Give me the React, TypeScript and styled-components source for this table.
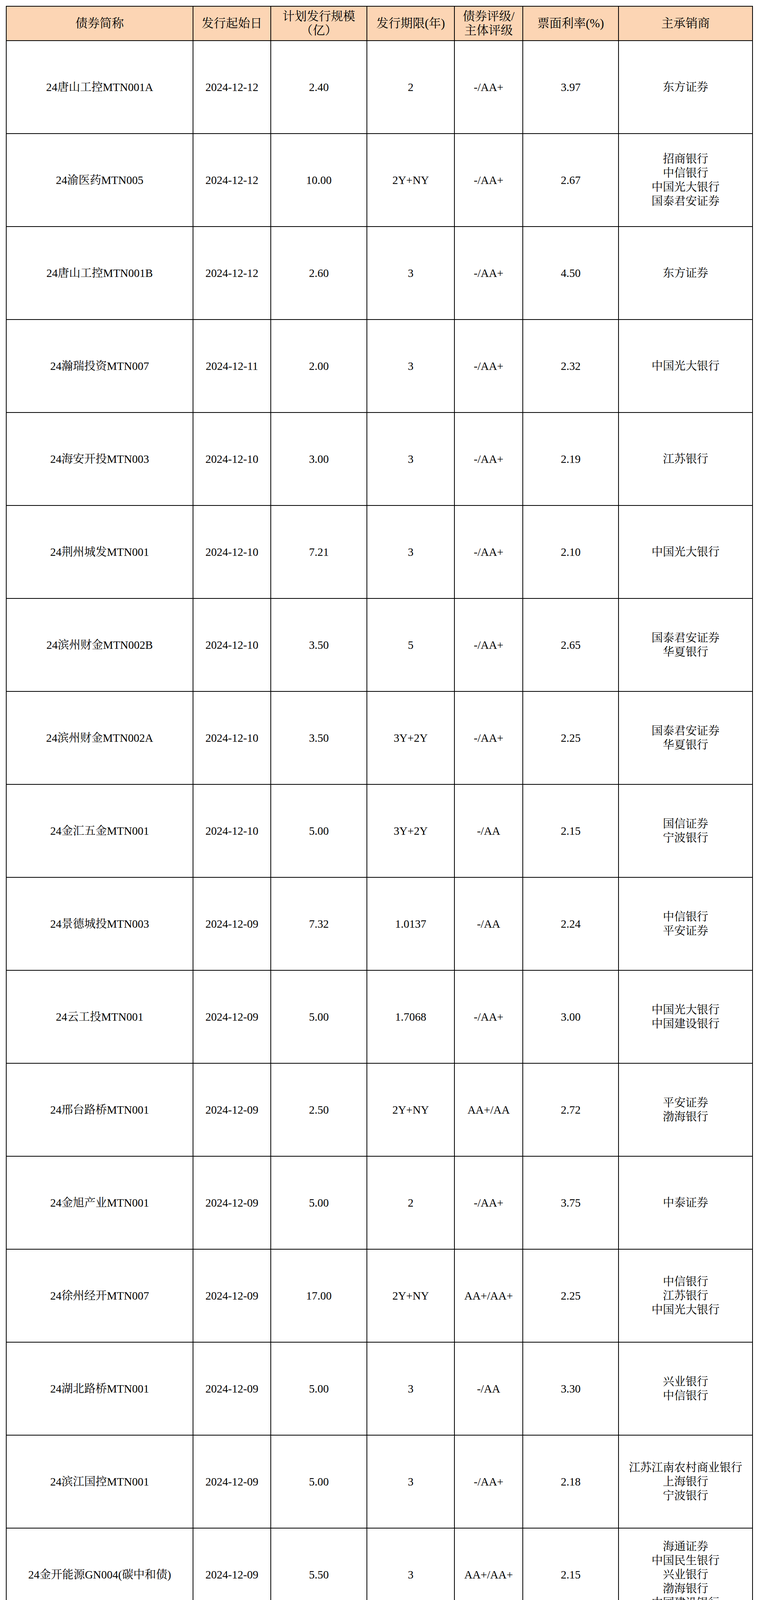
import React from "react";
import styled, { createGlobalStyle } from "styled-components";

const Global = createGlobalStyle`
  html, body { margin: 0; padding: 0; background: #ffffff; }
  body { font-family: "Liberation Serif", "Noto Serif CJK SC", "Noto Sans CJK SC", serif; color: #000; }
`;

const Page = styled.div`
  padding: 15px 0 0 15px;
  width: 1940px;
  box-sizing: border-box;
`;

const Table = styled.table`
  border-collapse: collapse;
  table-layout: fixed;
  width: 1910px;
  border-top: 2px solid #000;
  border-left: 2px solid #000;
  border-right: 2px solid #000;
  border-bottom: 3px solid #000;
`;

const HeadCell = styled.th`
  background: #fcd5b4;
  border: 2px solid #000;
  height: 86px;
  padding: 0;
  font-size: 31px;
  line-height: 36px;
  font-weight: 400;
  text-align: center;
  vertical-align: middle;
  white-space: nowrap;
`;

const Cell = styled.td`
  border: 2px solid #000;
  height: 236px;
  padding: 0;
  font-size: 29px;
  line-height: 36px;
  text-align: center;
  vertical-align: middle;
  white-space: nowrap;
`;

const Line = styled.div`
  display: block;
`;

type Row = [string, string, string, string, string, string, string[]];

const rows: Row[] = [
  ["24唐山工控MTN001A", "2024-12-12", "2.40", "2", "-/AA+", "3.97", ["东方证券"]],
  ["24渝医药MTN005", "2024-12-12", "10.00", "2Y+NY", "-/AA+", "2.67", ["招商银行", "中信银行", "中国光大银行", "国泰君安证券"]],
  ["24唐山工控MTN001B", "2024-12-12", "2.60", "3", "-/AA+", "4.50", ["东方证券"]],
  ["24瀚瑞投资MTN007", "2024-12-11", "2.00", "3", "-/AA+", "2.32", ["中国光大银行"]],
  ["24海安开投MTN003", "2024-12-10", "3.00", "3", "-/AA+", "2.19", ["江苏银行"]],
  ["24荆州城发MTN001", "2024-12-10", "7.21", "3", "-/AA+", "2.10", ["中国光大银行"]],
  ["24滨州财金MTN002B", "2024-12-10", "3.50", "5", "-/AA+", "2.65", ["国泰君安证券", "华夏银行"]],
  ["24滨州财金MTN002A", "2024-12-10", "3.50", "3Y+2Y", "-/AA+", "2.25", ["国泰君安证券", "华夏银行"]],
  ["24金汇五金MTN001", "2024-12-10", "5.00", "3Y+2Y", "-/AA", "2.15", ["国信证券", "宁波银行"]],
  ["24景德城投MTN003", "2024-12-09", "7.32", "1.0137", "-/AA", "2.24", ["中信银行", "平安证券"]],
  ["24云工投MTN001", "2024-12-09", "5.00", "1.7068", "-/AA+", "3.00", ["中国光大银行", "中国建设银行"]],
  ["24邢台路桥MTN001", "2024-12-09", "2.50", "2Y+NY", "AA+/AA", "2.72", ["平安证券", "渤海银行"]],
  ["24金旭产业MTN001", "2024-12-09", "5.00", "2", "-/AA+", "3.75", ["中泰证券"]],
  ["24徐州经开MTN007", "2024-12-09", "17.00", "2Y+NY", "AA+/AA+", "2.25", ["中信银行", "江苏银行", "中国光大银行"]],
  ["24湖北路桥MTN001", "2024-12-09", "5.00", "3", "-/AA", "3.30", ["兴业银行", "中信银行"]],
  ["24滨江国控MTN001", "2024-12-09", "5.00", "3", "-/AA+", "2.18", ["江苏江南农村商业银行", "上海银行", "宁波银行"]],
  ["24金开能源GN004(碳中和债)", "2024-12-09", "5.50", "3", "AA+/AA+", "2.15", ["海通证券", "中国民生银行", "兴业银行", "渤海银行", "中国建设银行"]],
  ["24农发租赁MTN001(乡村振兴)", "2024-12-09", "5.00", "3Y+NY", "-/AA+", "3.00", ["中信银行", "上海浦东发展银行", "江苏银行", "中国民生银行"]],
  ["24新开投资MTN002", "2024-12-09", "2.50", "3", "-/AA+", "2.34", ["杭州银行"]],
  ["24株国投MTN009A", "2024-12-09", "3.50", "3", "-/AA+", "2.30", ["兴业银行", "中国建设银行"]],
  ["24北京时尚MTN001", "2024-12-09", "5.00", "3Y+2Y", "AA+/AA+", "2.30", ["中信建投证券", "中国建设银行", "北京农村商业银行"]],
  ["24渝科学城MTN003", "2024-12-09", "3.00", "5", "-/AA+", "2.40", ["中信银行", "重庆农村商业银行"]],
  ["24株国投MTN009B", "2024-12-09", "3.50", "5", "-/AA+", "2.70", ["兴业银行", "中国建设银行"]],
];

const widths = [478, 199, 246, 224, 175, 245, 343];

export default function App() {
  return (
    <Page>
      <Global />
      <Table>
        <colgroup>
          {widths.map((w, i) => (
            <col key={i} style={{ width: w }} />
          ))}
        </colgroup>
        <thead>
          <tr>
            <HeadCell>债券简称</HeadCell>
            <HeadCell>发行起始日</HeadCell>
            <HeadCell>
              <Line>计划发行规模</Line>
              <Line>（亿）</Line>
            </HeadCell>
            <HeadCell>发行期限(年)</HeadCell>
            <HeadCell>
              <Line>债券评级/</Line>
              <Line>主体评级</Line>
            </HeadCell>
            <HeadCell>票面利率(%)</HeadCell>
            <HeadCell>主承销商</HeadCell>
          </tr>
        </thead>
        <tbody>
          {rows.map((r, i) => (
            <tr key={i}>
              <Cell>{r[0]}</Cell>
              <Cell>{r[1]}</Cell>
              <Cell>{r[2]}</Cell>
              <Cell>{r[3]}</Cell>
              <Cell>{r[4]}</Cell>
              <Cell>{r[5]}</Cell>
              <Cell>
                {r[6].map((u, j) => (
                  <Line key={j}>{u}</Line>
                ))}
              </Cell>
            </tr>
          ))}
        </tbody>
      </Table>
    </Page>
  );
}
